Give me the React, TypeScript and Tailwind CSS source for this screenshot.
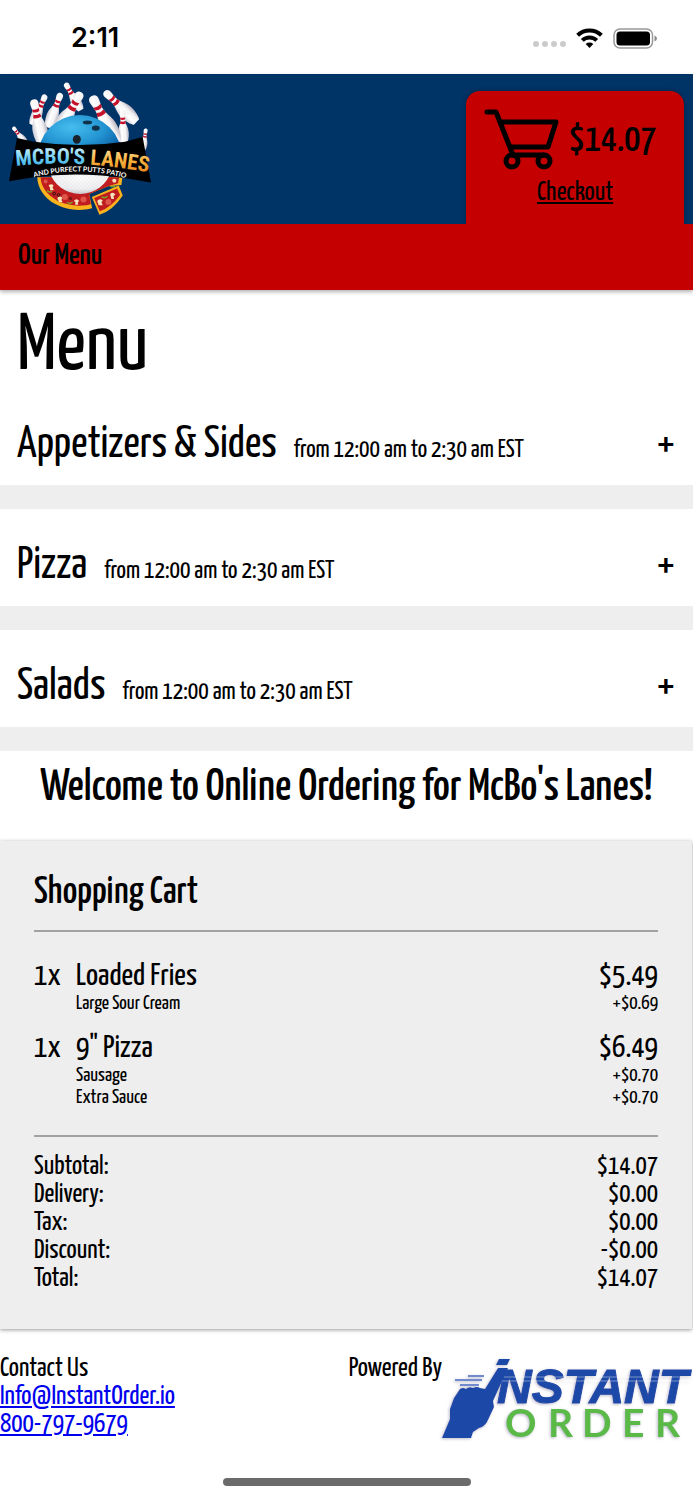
import React from "react";

const sections = [
  { name: "Appetizers & Sides", hours: "from 12:00 am to 2:30 am EST" },
  { name: "Pizza", hours: "from 12:00 am to 2:30 am EST" },
  { name: "Salads", hours: "from 12:00 am to 2:30 am EST" },
];

const cartItems = [
  {
    qty: 1,
    name: "Loaded Fries",
    price: "$5.49",
    options: [{ name: "Large Sour Cream", price: "+$0.69" }],
  },
  {
    qty: 1,
    name: '9" Pizza',
    price: "$6.49",
    options: [
      { name: "Sausage", price: "+$0.70" },
      { name: "Extra Sauce", price: "+$0.70" },
    ],
  },
];

const totals = [
  ["Subtotal:", "$14.07"],
  ["Delivery:", "$0.00"],
  ["Tax:", "$0.00"],
  ["Discount:", "-$0.00"],
  ["Total:", "$14.07"],
];

// [x of head, y of head, rotation, scale], back to front
const pins = [
  [134, 84, 24, 0.9],
  [42, 178, -38, 0.6],
  [438, 184, 8, 0.6],
  [180, 80, 20, 1],
  [200, 48, -30, 0.85],
  [103, 102, -12, 1.25],
  [322, 74, -46, 1.2],
  [368, 132, -3, 0.9],
  [238, 80, 30, 1.35],
  [282, 92, -28, 1.45],
];

const StatusBar: React.FC = () => (
  <div className="flex h-[74px] items-center justify-between pl-[71px] pr-9 pt-0.5">
    <span className="font-[Inter,sans-serif] text-[27px] font-semibold leading-8">2:11</span>
    <div className="flex items-center gap-2.5">
      <div className="flex gap-[3px] pt-3">
        {[0, 1, 2, 3].map((dot) => (
          <span key={dot} className="h-1.5 w-1.5 rounded-sm bg-[#cbcbcb]" />
        ))}
      </div>
      <svg className="h-5 w-[27px]" viewBox="0 0 27 20" fill="none" stroke="#000" strokeWidth="4">
        <path d="M1.6 7.3a17 17 0 0 1 23.8 0" />
        <path d="M6.3 12.4a10.2 10.2 0 0 1 14.4 0" />
        <path d="M13.5 20l-3.8-4a5.6 5.6 0 0 1 7.6 0z" fill="#000" stroke="none" />
      </svg>
      <svg className="h-[21px] w-11" viewBox="0 0 44 21">
        <rect x="1" y="1" width="38.500" height="19" rx="6" fill="#fff" stroke="#999" strokeWidth="1.500" />
        <rect x="3.500" y="3.500" width="33.500" height="14" rx="3.500" />
        <path d="M41.500 7.500q2.500 1 2.500 3t-2.500 3z" fill="#888" />
      </svg>
    </div>
  </div>
);

const Pin = ({ x, y, angle, scale }: { x: number; y: number; angle: number; scale: number }) => (
  <g transform={`translate(${x} ${y}) rotate(${angle}) scale(${scale})`}>
    <path
      d="M0-9C8-9 11-3 10 4C9 13 7 18 8 27C10 41 18 50 18 68C18 82 14 96 10 102H-10C-14 96-18 82-18 68C-18 50-10 41-8 27C-7 18-9 13-10 4C-11-3-8-9 0-9Z"
      fill="url(#pin)"
    />
    <path d="M-8.500 14Q0 18 8.500 14L8 21Q0 25-8 21ZM-8 27Q0 31 8 27L10 35Q0 39-10 35Z" fill="#c4122b" />
  </g>
);

const McBosLogo: React.FC = () => (
  <svg className="h-[135px] w-[143px] overflow-visible" viewBox="27 36 430 405" role="img" aria-label="McBo's Lanes">
    <defs>
      <linearGradient id="pin">
        <stop offset="0" stopColor="#c9c9d2" />
        <stop offset=".35" stopColor="#fff" />
        <stop offset=".7" stopColor="#f4f2f4" />
        <stop offset="1" stopColor="#b5b2bd" />
      </linearGradient>
      <radialGradient id="ball" cx=".4" cy=".3" r=".65">
        <stop offset="0" stopColor="#45bdee" />
        <stop offset=".6" stopColor="#2394d2" />
        <stop offset="1" stopColor="#0d66ac" />
      </radialGradient>
      <radialGradient id="golf" cx=".5" cy=".3" r=".7">
        <stop offset="0" stopColor="#fff" />
        <stop offset=".7" stopColor="#f0f0f2" />
        <stop offset="1" stopColor="#c4c4ca" />
      </radialGradient>
      <linearGradient id="blueText" x2="0" y2="1">
        <stop offset="0" stopColor="#e9faff" />
        <stop offset=".5" stopColor="#5dc6ee" />
        <stop offset="1" stopColor="#1f86c8" />
      </linearGradient>
      <linearGradient id="orangeText" x2="0" y2="1">
        <stop offset="0" stopColor="#fff0c0" />
        <stop offset=".5" stopColor="#f7b23b" />
        <stop offset="1" stopColor="#e0781a" />
      </linearGradient>
      <pattern id="dimples" width="12" height="12" patternUnits="userSpaceOnUse">
        <circle cx="3" cy="3" r="2" fill="#dcdce1" />
        <circle cx="9" cy="9" r="2" fill="#dcdce1" />
      </pattern>
      <path id="titleArc" d="M48 291Q240 270 460 313" />
      <path id="subtitleArc" d="M102 325Q240 288 386 330" />
    </defs>
    {pins.map(([x, y, angle, scale]) => (
      <Pin key={`${x}-${y}`} x={x} y={y} angle={angle} scale={scale} />
    ))}
    <path d="M114 264A126 126 0 0 1 366 264Z" fill="url(#ball)" />
    <ellipse cx="263" cy="160" rx="14" ry="6" fill="#10324a" />
    <ellipse cx="288" cy="177" rx="12" ry="8" fill="#10324a" />
    <ellipse cx="231" cy="211" rx="12" ry="13" fill="#17222b" />
    {/* pizza */}
    <path d="M112 325A125 100 0 0 0 277 418L268 375L325 352L365 348L368 325Z" fill="#f9b31c" />
    <path d="M122 325A115 88 0 0 0 273 406L268 375L325 352L355 343L358 325Z" fill="#c01d20" />
    <path d="M276 384L357 350L369 380Q340 425 299 438Z" fill="#f9b31c" />
    <path d="M283 387L352 359L361 378Q335 415 300 427Z" fill="#c01d20" />
    <g fill="#f6e6bd">
      <path d="M146 350q8-8 15 0l-3 6 4 8h-11l-1-8z" />
      <path d="M172 388q6-9 15-2l-2 7 3 7-10-1z" />
      <path d="M222 396q8-10 16 0l-4 4 1 8h-9l1-8z" />
      <path d="M292 396q8-10 17-1l-4 5 4 9h-12z" />
      <path d="M331 376q8-9 16 1l-6 4 2 9h-8z" />
      <path d="M337 333q6-7 13 0l-2 8h-8z" />
    </g>
    <g fill="#de5549">
      <circle cx="195" cy="384" r="9" />
      <circle cx="251" cy="392" r="9" />
      <circle cx="326" cy="399" r="9" />
      <circle cx="137" cy="338" r="6" />
    </g>
    <g fill="none" stroke="#76ab27" strokeWidth="4">
      <path d="M141 365q8 8 15 2M201 401q9 5 17-2M306 384q9 6 17-2M331 351q8 6 15 0" />
    </g>
    <g fill="none" stroke="#2d1712" strokeWidth="3">
      <circle cx="163" cy="374" r="4" />
      <circle cx="176" cy="378" r="4" />
      <circle cx="212" cy="389" r="3" />
    </g>
    <path d="M147 305A98 98 0 0 0 335 305Z" fill="url(#golf)" />
    <path d="M151 305A94 94 0 0 0 331 305Z" fill="url(#dimples)" />
    {/* banner */}
    <path d="M51 207L103 218Q240 238 376 218L429 204L454 341L384 329Q240 306 100 325L27 337Z" fill="#000" />
    <text fontFamily="'Roboto Condensed', sans-serif" fontWeight="700" fontSize="65">
      <textPath href="#titleArc">
        <tspan fill="url(#blueText)">MCBO'S </tspan>
        <tspan fill="url(#orangeText)">LANES</tspan>
      </textPath>
    </text>
    <text fontFamily="Lato, sans-serif" fontWeight="700" fontSize="21" fill="#fff">
      <textPath href="#subtitleArc">AND PURFECT PUTTS PATIO</textPath>
    </text>
  </svg>
);

const CartIcon: React.FC = () => (
  <svg
    className="h-[62px] w-[75px]"
    viewBox="0 0 75 62"
    fill="none"
    stroke="#000"
    strokeWidth="5"
    strokeLinecap="round"
    strokeLinejoin="round"
  >
    <path d="M3 3h9l17 43M16 13h56l-8 25H26M28 46h32" />
    <circle cx="28" cy="52" r="6" />
    <circle cx="60" cy="52" r="6" />
  </svg>
);

const InstantOrderLogo: React.FC = () => (
  <svg className="h-[84px] w-[251px] overflow-visible" viewBox="0 0 251 84" role="img" aria-label="Instant Order">
    <defs>
      <filter id="logoShadow" x="-10%" y="-10%" width="120%" height="125%">
        <feDropShadow dx="-1" dy="1" stdDeviation="1.500" floodColor="#8d8aa8" floodOpacity=".6" />
      </filter>
    </defs>
    <g filter="url(#logoShadow)">
      <path
        d="M0 81L8 62V52L12 41L18 32Q21 30 24 32Q27 29 31 31Q35 29 38 31L43 32L56 11H66L51 44L52 50L45 65Q42 70 37 71L31 75L29 81Z"
        fill="#1f4aa8"
      />
      <path d="M57 2H68L65 8H54Z" fill="#1f4aa8" />
      <path d="M26 19H42M13 23H40M18 28H37" stroke="#6f8ccc" strokeWidth="2" />
      <text
        x="55"
        y="46"
        fill="#1f4aa8"
        stroke="#1f4aa8"
        strokeWidth="1"
        fontFamily="'Liberation Sans', sans-serif"
        fontSize="48"
        fontWeight="700"
        fontStyle="italic"
      >
        NSTANT
      </text>
      <path d="M62 20H250M60 24H248" stroke="#fff" strokeWidth="1" opacity=".4" />
      <g fill="#5ab947" fontFamily="Lato, sans-serif" fontSize="39" fontWeight="700">
        <text x="63" y="80">O</text>
        <text x="106" y="80">R</text>
        <text x="140" y="80">D</text>
        <text x="180" y="80">E</text>
        <text x="213" y="80">R</text>
      </g>
    </g>
  </svg>
);

const Header: React.FC = () => (
  <header className="shadow-[0_2px_4px_rgba(0,0,0,0.3)]">
    <div className="flex h-[150px] items-end justify-between bg-[#003366] px-[9px]">
      <a href="#home" className="pb-2">
        <McBosLogo />
      </a>
      <div className="flex h-[133px] w-[218px] flex-col items-center rounded-t-[14px] bg-[#c40000] pt-[18px] shadow-[0_0_5px_rgba(0,0,0,0.3)]">
        <div className="flex items-center gap-2.5 pr-2.5">
          <CartIcon />
          <span className="text-[39px] font-medium leading-none">$14.07</span>
        </div>
        <a href="#checkout" className="pt-2 text-[27px] leading-7 underline">
          Checkout
        </a>
      </div>
    </div>
    <nav className="relative h-[66px] bg-[#c40000] px-[18px] pt-[18px]">
      <a href="#menu" className="text-3xl font-medium leading-7">
        Our Menu
      </a>
    </nav>
  </header>
);

const ShoppingCart: React.FC = () => (
  <section className="mr-px bg-[#eeeeee] px-[34px] pt-[34px] pb-9 shadow-[0_1px_4px_rgba(0,0,0,0.4)]">
    <h2 className="text-[39px] font-medium leading-9">Shopping Cart</h2>
    <hr className="mt-[19px] border-t-2 border-[#a2a2a2]" />
    <ul className="flex flex-col gap-[17px] pt-7 pb-[26px]">
      {cartItems.map((item) => (
        <li key={item.name}>
          <div className="flex text-[32px] leading-[33px]">
            <span className="w-[42px]">{item.qty}x</span>
            <span className="grow">{item.name}</span>
            <span>{item.price}</span>
          </div>
          {item.options.map((option) => (
            <div key={option.name} className="flex justify-between pl-[42px] text-xl leading-[22px]">
              <span>{option.name}</span>
              <span>{option.price}</span>
            </div>
          ))}
        </li>
      ))}
    </ul>
    <hr className="border-t-2 border-[#a2a2a2]" />
    <table className="mt-4 w-full text-[27px] leading-7">
      <tbody>
        {totals.map(([label, amount]) => (
          <tr key={label}>
            <th scope="row" className="p-0 text-left font-normal">
              {label}
            </th>
            <td className="p-0 text-right">{amount}</td>
          </tr>
        ))}
      </tbody>
    </table>
  </section>
);

const App: React.FC = () => {
  return (
    <div className="min-h-screen bg-white font-['Yanone_Kaffeesatz','Roboto_Condensed',sans-serif] text-black">
      <StatusBar />
      <Header />
      <main>
        <h1 className="px-[17px] pt-4 text-[81px] leading-[82px]">Menu</h1>
        {sections.map((section) => (
          <section key={section.name} className="border-b-24 border-[#eeeeee]">
            <button type="button" className="flex h-[97px] w-full items-center justify-between px-[17px] pt-4">
              <span className="flex items-baseline gap-[17px] pt-0.5">
                <span className="text-[45px] leading-none">{section.name}</span>
                <span className="text-[25px] leading-none">{section.hours}</span>
              </span>
              <span className="pb-1.5 font-[Inter,sans-serif] text-3xl font-semibold">+</span>
            </button>
          </section>
        ))}
        <h2 className="pt-4 pb-[31px] text-center text-[45px] font-medium leading-[43px]">
          Welcome to Online Ordering for McBo's Lanes!
        </h2>
        <ShoppingCart />
      </main>
      <footer className="flex justify-between pt-[26px] text-[27px] leading-7">
        <address className="flex flex-col items-start not-italic">
          <span>Contact Us</span>
          <a href="mailto:Info@InstantOrder.io" className="text-[#0000ee] underline">
            Info@InstantOrder.io
          </a>
          <a href="tel:800-797-9679" className="text-[#0000ee] underline">
            800-797-9679
          </a>
        </address>
        <div className="flex">
          <span>Powered By</span>
          <div className="pt-0.5">
            <InstantOrderLogo />
          </div>
        </div>
      </footer>
      <div className="mx-auto mt-[37px] h-2 w-[248px] rounded-full bg-[#6b6b6b]" />
    </div>
  );
};

export default App;
